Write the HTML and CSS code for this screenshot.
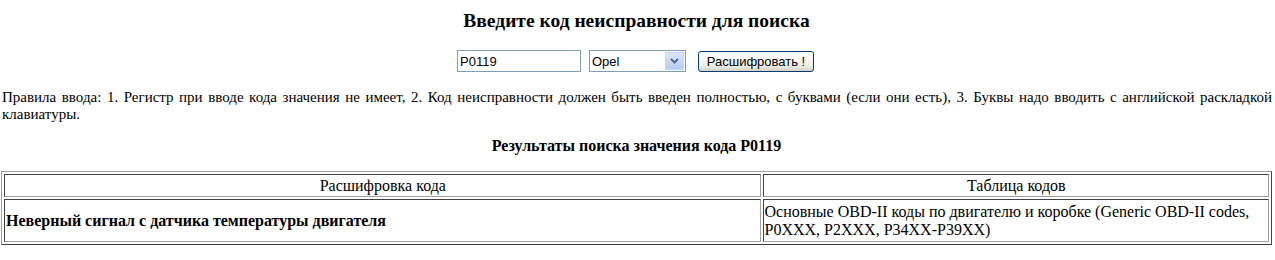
FILE: index.html
```html
<!DOCTYPE html>
<html lang="ru">
<head>
<meta charset="utf-8">
<title>Расшифровка кода</title>
<link rel="stylesheet" href="styles.css">
</head>
<body>
<h1 class="title">Введите код неисправности для поиска</h1>
<form class="search">
  <input class="code-input" type="text" value="P0119">
  <div class="select">
    <span class="select-value">Opel</span>
    <span class="select-arrow">
      <svg width="9" height="6" viewBox="0 0 9 6"><path d="M1 1 L4.5 4.5 L8 1" fill="none" stroke="#4d6185" stroke-width="1.8"/></svg>
    </span>
  </div>
  <button class="submit" type="button">Расшифровать !</button>
</form>
<p class="rules">Правила ввода: 1. Регистр при вводе кода значения не имеет, 2. Код неисправности должен быть введен полностью, с буквами (если они есть), 3. Буквы надо вводить с английской раскладкой клавиатуры.</p>
<h2 class="subtitle">Результаты поиска значения кода P0119</h2>
<table class="results">
  <tr>
    <td class="head head-left">Расшифровка кода</td>
    <td class="head">Таблица кодов</td>
  </tr>
  <tr>
    <td class="cell cell-bold">Неверный сигнал с датчика температуры двигателя</td>
    <td class="cell">Основные OBD-II коды по двигателю и коробке (Generic OBD-II codes, P0XXX, P2XXX, P34XX-P39XX)</td>
  </tr>
</table>
</body>
</html>
```
FILE: styles.css
```css
html, body {
  background: #fff;
}
body {
  margin: 0;
  padding: 0 3px 0 1px;
  font-family: "Liberation Serif", "Times New Roman", serif;
  font-size: 15px;
  color: #000;
}
.title {
  margin: 0;
  padding-top: 10px;
  font-size: 19.5px;
  font-weight: bold;
  text-align: center;
  line-height: 22px;
}
.search {
  display: flex;
  justify-content: center;
  align-items: center;
  gap: 8px;
  margin-top: 18px;
  padding-right: 2px;
}
.code-input {
  box-sizing: border-box;
  width: 124px;
  height: 22px;
  border: 1px solid #7f9db9;
  padding: 1px 2px;
  font-family: "Liberation Sans", Arial, sans-serif;
  font-size: 13px;
  color: #000;
  margin: 0;
}
.select {
  box-sizing: border-box;
  width: 97px;
  height: 22px;
  border: 1px solid #7f9db9;
  display: flex;
  align-items: stretch;
  justify-content: space-between;
  font-family: "Liberation Sans", Arial, sans-serif;
  font-size: 13px;
}
.select-value {
  padding: 3px 0 0 2px;
}
.select-arrow {
  width: 17px;
  margin: 1px;
  background: linear-gradient(#dbe5fb, #b9cbf3);
  border: 1px solid #c3d3fd;
  display: flex;
  align-items: center;
  justify-content: center;
}
.submit {
  box-sizing: border-box;
  margin-left: 4px;
  width: 116px;
  height: 21px;
  border: 1px solid #003c74;
  border-radius: 3px;
  background: linear-gradient(#ffffff, #f0f0ea 70%, #d6d0c5);
  font-family: "Liberation Sans", Arial, sans-serif;
  font-size: 13px;
  color: #000;
  padding: 0;
}
.rules {
  margin: 17px 0 0;
  padding-left: 1px;
  text-align: justify;
  line-height: 17px;
  font-size: 15px;
}
.subtitle {
  margin: 14px 0 0;
  text-align: center;
  font-size: 16px;
  font-weight: bold;
  line-height: 18px;
}
.results {
  margin-top: 16px;
  width: 100%;
  border: 1px solid;
  border-color: #a0a0a0 #404040 #404040 #a0a0a0;
  border-spacing: 2px;
}
.results td {
  border: 1px solid;
  border-color: #404040 #a0a0a0 #a0a0a0 #404040;
  padding: 0 0 0 1px;
  font-size: 16px;
  line-height: 18px;
}
.head {
  text-align: center;
  height: 21px;
}
.head-left {
  width: 59.9%;
}
.cell {
  height: 41px;
  vertical-align: middle;
}
.cell-bold {
  font-weight: bold;
}
```
